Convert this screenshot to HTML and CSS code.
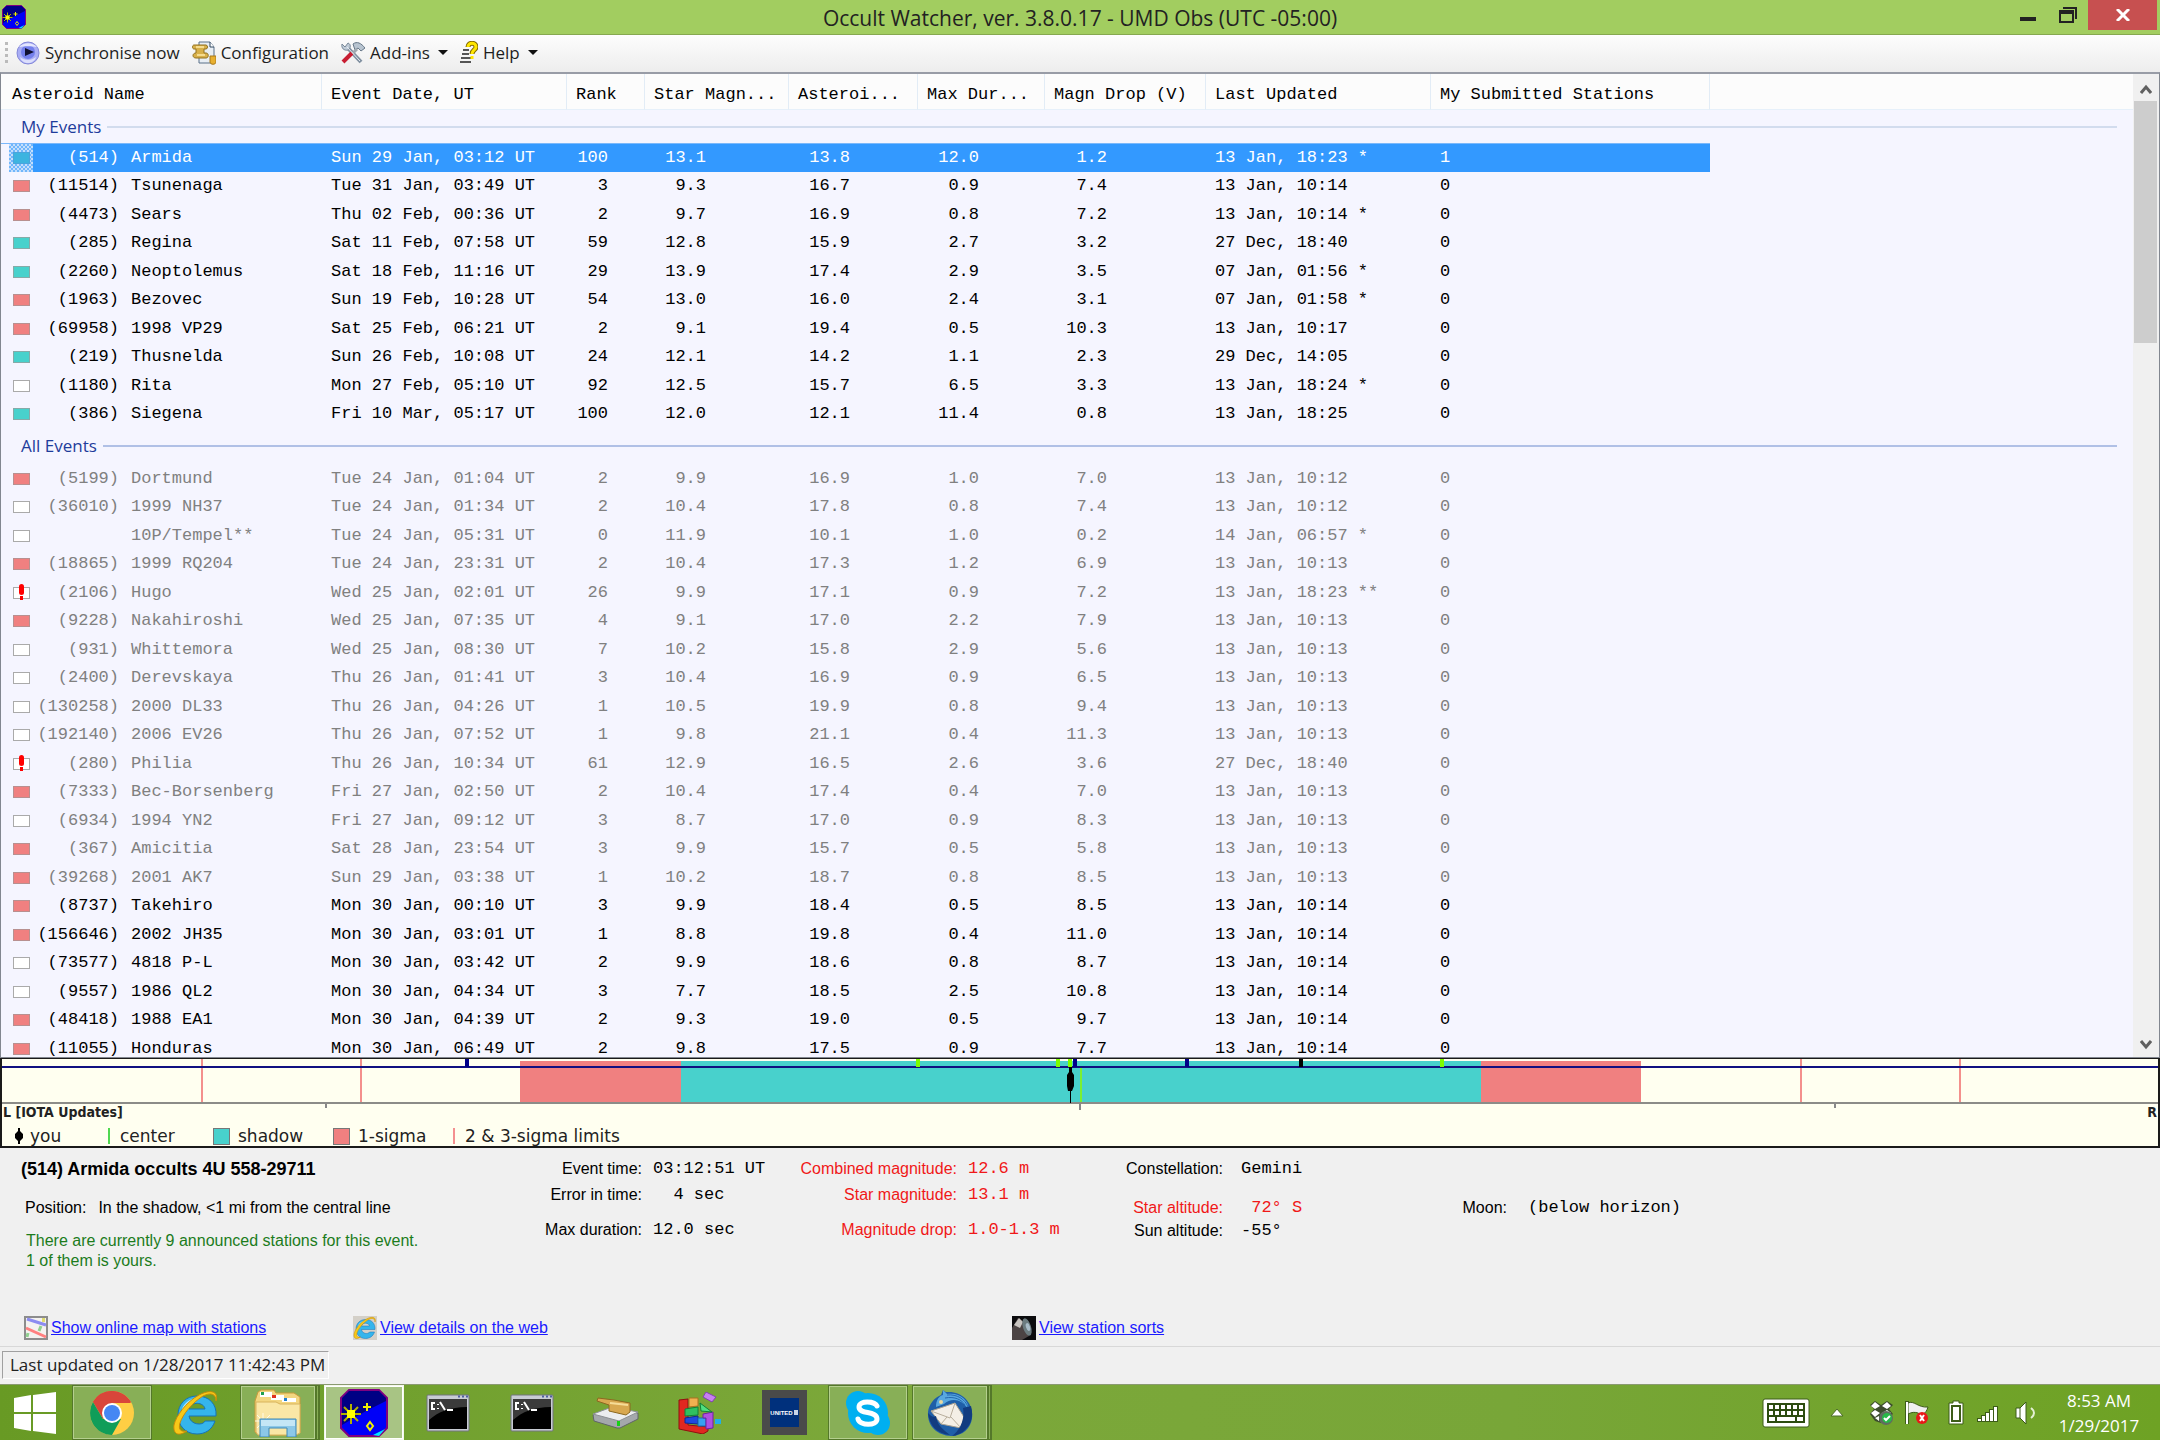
FILE: index.html
```html
<!DOCTYPE html>
<html lang="en">
<head>
<meta charset="utf-8">
<title>Occult Watcher</title>
<link rel="stylesheet" href="styles.css">
</head>
<body>
<svg class="defs" aria-hidden="true">
  <symbol id="app" viewBox="0 0 48 48">
    <path d="M9 1H39L47 9V39L39 47H9L1 39V9Z" fill="#0000f8" stroke="#800080" stroke-width="2"/>
    <path d="M9 2H39L46 9V12L26 22L2 36V9Z" fill="#000084"/>
    <path d="M11 15V35M1 25H21M4 18L18 32M18 18L4 32" stroke="#b0b000" stroke-width="2"/>
    <rect x="7" y="21" width="8" height="8" fill="#ffff00"/>
    <path d="M27 14V22M23 18H31M30 33L33 37L30 41L27 37Z" stroke="#f0f000" stroke-width="2" fill="none"/>
    <path d="M33 46L45 40L39 47Z" fill="#00e8ff"/>
  </symbol>
  <symbol id="ie" viewBox="0 0 48 48">
    <path d="M44 27H17C18 36 31 37 33 32H43C40 41 33 45 25 45C13 45 6 36 6 26C6 15 14 7 25 7C37 7 45 15 44 27ZM33 20C32 13 19 12 17 20Z" fill="#35b5ec" stroke="#1673b8" stroke-width="1"/>
    <path d="M10 20C13 12 20 9 27 10C20 12 14 15 10 22Z" fill="#a8e6fb"/>
    <path d="M44 12C47 2 38 0 27 6C14 13 4 27 2 36C1 45 6 48 15 42C9 43 6 41 8 34C11 25 20 14 31 7C39 3 44 5 44 12Z" fill="#f8c818" stroke="#c98c08" stroke-width="1"/>
  </symbol>
  <symbol id="cmd" viewBox="0 0 44 38">
    <rect x="1" y="1" width="42" height="36" rx="1" fill="#c8ccd4" stroke="#70747c"/>
    <path d="M32 2.500H42" stroke="#5060a0" stroke-width="2" stroke-dasharray="2 2"/>
    <rect x="3" y="5" width="38" height="30" fill="#000"/>
    <path d="M3 5H41V13C24 13 12 18 3 26Z" fill="#3b3b3b"/>
    <path d="M9 9H6V15H9M12 10V11M12 14V15M14 8L19 16M21 16H27" stroke="#fff" stroke-width="2" fill="none"/>
  </symbol>
</svg>

<header class="titlebar">
  <svg class="title-icon"><use href="#app"/></svg>
  <h1>Occult Watcher, ver. 3.8.0.17 - UMD Obs (UTC -05:00)</h1>
  <div class="window-buttons">
    <button class="minimize" aria-label="Minimize"><svg viewBox="0 0 16 18" width="16" height="18"><rect y="11" width="16" height="4" fill="#222"/></svg></button>
    <button class="restore" aria-label="Restore"><svg viewBox="0 0 18 16" width="18" height="16"><path d="M4 1H17V12" fill="none" stroke="#222" stroke-width="2"/><path d="M0 3H15V16H0ZM2 7V14H13V7Z" fill="#222" fill-rule="evenodd"/></svg></button>
    <button class="close" aria-label="Close"><svg viewBox="0 0 14 12" width="14" height="12"><path d="M1 0L13 12M13 0L1 12" stroke="#fff" stroke-width="3"/></svg></button>
  </div>
</header>

<nav class="toolbar">
  <span class="grip"></span>
  <button class="tool"><svg viewBox="0 0 24 24"><circle cx="12" cy="12" r="11" fill="#a9aef5" stroke="#8488d8"/><circle cx="12" cy="11" r="7" fill="#7480ec"/><path d="M3 6C8 1 16 1 21 6C16 5 8 5 3 6Z" fill="#e4e6ff"/><path d="M4 16C9 20 15 20 20 16C18 24 6 24 4 16Z" fill="#dcdffc"/><path d="M9 7L18 11L9 15Z" fill="#101030"/></svg>Synchronise now</button>
  <button class="tool"><svg viewBox="0 0 24 24"><path d="M7 1H18L22 6V22H7Z" fill="#e8eef4" stroke="#5a7088"/><path d="M18 1V6H22" fill="#fff" stroke="#304860"/><path d="M2 4H14C16 4 16 8 14 8H12V12H14C17 12 17 17 14 17H4C0 17 0 12 4 12V8H2C0 8 0 4 2 4Z" fill="#d8b04a" stroke="#92701e"/><path d="M4 6H12M5 14H13" stroke="#f6dc8e" stroke-width="2"/><path d="M18 15H24V21C24 24 18 24 18 21Z" fill="#e8b030" stroke="#a87818"/></svg>Configuration</button>
  <button class="tool"><svg viewBox="0 0 24 24"><path d="M5 5L20 21" stroke="#8090a0" stroke-width="4"/><path d="M1 3L4 6L7 2C10 3 10 7 7 9C3 10 0 7 1 3Z" fill="#c0ccd8" stroke="#788898"/><path d="M12 3C16 0 20 2 24 7L20 10L17 7L14 9Z" fill="#b8c4d0" stroke="#687888"/><path d="M16 8L11 13" stroke="#a0a8b0" stroke-width="3"/><path d="M11 12L2 21" stroke="#c81e32" stroke-width="4"/><path d="M6 6L19 20" stroke="#e8eef4" stroke-width="1"/></svg>Add-ins<i class="caret"></i></button>
  <button class="tool help"><svg viewBox="0 0 18 24"><path d="M2 9H12V22H2Z" fill="#f4f4f4"/><path d="M3 9H9M2 13H9M1 17H11M0 21H11" stroke="#555" stroke-width="2"/><path d="M8 6C8 1 16 1 16 6C16 9 12 9 12 13" fill="none" stroke="#806800" stroke-width="5"/><path d="M8 6C8 1 16 1 16 6C16 9 12 9 12 13M12 15V18" fill="none" stroke="#ffe600" stroke-width="3"/></svg>Help<i class="caret"></i></button>
</nav>

<main class="list-panel">
<div class="list">
<table>
<colgroup><col class="c-mark"><col class="c-num"><col class="c-name"><col class="c-date"><col class="c-rank"><col class="c-star"><col class="c-ast"><col class="c-dur"><col class="c-drop"><col class="c-upd"><col class="c-sub"><col></colgroup>
<thead><tr><th colspan="3">Asteroid Name</th><th>Event Date, UT</th><th>Rank</th><th>Star Magn...</th><th>Asteroi...</th><th>Max Dur...</th><th>Magn Drop (V)</th><th>Last Updated</th><th>My Submitted Stations</th><th class="filler"></th></tr></thead>
<tbody class="mine">
<tr class="group"><th colspan="12"><div>My Events</div></th></tr>
<tr class="selected"><td><i class="teal"></i></td><td>(514)</td><td>Armida</td><td>Sun 29 Jan, 03:12 UT</td><td>100</td><td>13.1</td><td>13.8</td><td>12.0</td><td>1.2</td><td>13 Jan, 18:23 *</td><td>1</td><td></td></tr>
<tr><td><i class="coral"></i></td><td>(11514)</td><td>Tsunenaga</td><td>Tue 31 Jan, 03:49 UT</td><td>3</td><td>9.3</td><td>16.7</td><td>0.9</td><td>7.4</td><td>13 Jan, 10:14</td><td>0</td><td></td></tr>
<tr><td><i class="coral"></i></td><td>(4473)</td><td>Sears</td><td>Thu 02 Feb, 00:36 UT</td><td>2</td><td>9.7</td><td>16.9</td><td>0.8</td><td>7.2</td><td>13 Jan, 10:14 *</td><td>0</td><td></td></tr>
<tr><td><i class="teal"></i></td><td>(285)</td><td>Regina</td><td>Sat 11 Feb, 07:58 UT</td><td>59</td><td>12.8</td><td>15.9</td><td>2.7</td><td>3.2</td><td>27 Dec, 18:40</td><td>0</td><td></td></tr>
<tr><td><i class="teal"></i></td><td>(2260)</td><td>Neoptolemus</td><td>Sat 18 Feb, 11:16 UT</td><td>29</td><td>13.9</td><td>17.4</td><td>2.9</td><td>3.5</td><td>07 Jan, 01:56 *</td><td>0</td><td></td></tr>
<tr><td><i class="coral"></i></td><td>(1963)</td><td>Bezovec</td><td>Sun 19 Feb, 10:28 UT</td><td>54</td><td>13.0</td><td>16.0</td><td>2.4</td><td>3.1</td><td>07 Jan, 01:58 *</td><td>0</td><td></td></tr>
<tr><td><i class="coral"></i></td><td>(69958)</td><td>1998 VP29</td><td>Sat 25 Feb, 06:21 UT</td><td>2</td><td>9.1</td><td>19.4</td><td>0.5</td><td>10.3</td><td>13 Jan, 10:17</td><td>0</td><td></td></tr>
<tr><td><i class="teal"></i></td><td>(219)</td><td>Thusnelda</td><td>Sun 26 Feb, 10:08 UT</td><td>24</td><td>12.1</td><td>14.2</td><td>1.1</td><td>2.3</td><td>29 Dec, 14:05</td><td>0</td><td></td></tr>
<tr><td><i></i></td><td>(1180)</td><td>Rita</td><td>Mon 27 Feb, 05:10 UT</td><td>92</td><td>12.5</td><td>15.7</td><td>6.5</td><td>3.3</td><td>13 Jan, 18:24 *</td><td>0</td><td></td></tr>
<tr><td><i class="teal"></i></td><td>(386)</td><td>Siegena</td><td>Fri 10 Mar, 05:17 UT</td><td>100</td><td>12.0</td><td>12.1</td><td>11.4</td><td>0.8</td><td>13 Jan, 18:25</td><td>0</td><td></td></tr>
</tbody>
<tbody class="all">
<tr class="group"><th colspan="12"><div>All Events</div></th></tr>
<tr class="past"><td><i class="coral"></i></td><td>(5199)</td><td>Dortmund</td><td>Tue 24 Jan, 01:04 UT</td><td>2</td><td>9.9</td><td>16.9</td><td>1.0</td><td>7.0</td><td>13 Jan, 10:12</td><td>0</td><td></td></tr>
<tr class="past"><td><i></i></td><td>(36010)</td><td>1999 NH37</td><td>Tue 24 Jan, 01:34 UT</td><td>2</td><td>10.4</td><td>17.8</td><td>0.8</td><td>7.4</td><td>13 Jan, 10:12</td><td>0</td><td></td></tr>
<tr class="past"><td><i></i></td><td></td><td>10P/Tempel**</td><td>Tue 24 Jan, 05:31 UT</td><td>0</td><td>11.9</td><td>10.1</td><td>1.0</td><td>0.2</td><td>14 Jan, 06:57 *</td><td>0</td><td></td></tr>
<tr class="past"><td><i class="coral"></i></td><td>(18865)</td><td>1999 RQ204</td><td>Tue 24 Jan, 23:31 UT</td><td>2</td><td>10.4</td><td>17.3</td><td>1.2</td><td>6.9</td><td>13 Jan, 10:13</td><td>0</td><td></td></tr>
<tr class="past"><td><i class="alert"></i></td><td>(2106)</td><td>Hugo</td><td>Wed 25 Jan, 02:01 UT</td><td>26</td><td>9.9</td><td>17.1</td><td>0.9</td><td>7.2</td><td>13 Jan, 18:23 **</td><td>0</td><td></td></tr>
<tr class="past"><td><i class="coral"></i></td><td>(9228)</td><td>Nakahiroshi</td><td>Wed 25 Jan, 07:35 UT</td><td>4</td><td>9.1</td><td>17.0</td><td>2.2</td><td>7.9</td><td>13 Jan, 10:13</td><td>0</td><td></td></tr>
<tr class="past"><td><i></i></td><td>(931)</td><td>Whittemora</td><td>Wed 25 Jan, 08:30 UT</td><td>7</td><td>10.2</td><td>15.8</td><td>2.9</td><td>5.6</td><td>13 Jan, 10:13</td><td>0</td><td></td></tr>
<tr class="past"><td><i></i></td><td>(2400)</td><td>Derevskaya</td><td>Thu 26 Jan, 01:41 UT</td><td>3</td><td>10.4</td><td>16.9</td><td>0.9</td><td>6.5</td><td>13 Jan, 10:13</td><td>0</td><td></td></tr>
<tr class="past"><td><i></i></td><td>(130258)</td><td>2000 DL33</td><td>Thu 26 Jan, 04:26 UT</td><td>1</td><td>10.5</td><td>19.9</td><td>0.8</td><td>9.4</td><td>13 Jan, 10:13</td><td>0</td><td></td></tr>
<tr class="past"><td><i></i></td><td>(192140)</td><td>2006 EV26</td><td>Thu 26 Jan, 07:52 UT</td><td>1</td><td>9.8</td><td>21.1</td><td>0.4</td><td>11.3</td><td>13 Jan, 10:13</td><td>0</td><td></td></tr>
<tr class="past"><td><i class="alert"></i></td><td>(280)</td><td>Philia</td><td>Thu 26 Jan, 10:34 UT</td><td>61</td><td>12.9</td><td>16.5</td><td>2.6</td><td>3.6</td><td>27 Dec, 18:40</td><td>0</td><td></td></tr>
<tr class="past"><td><i class="coral"></i></td><td>(7333)</td><td>Bec-Borsenberg</td><td>Fri 27 Jan, 02:50 UT</td><td>2</td><td>10.4</td><td>17.4</td><td>0.4</td><td>7.0</td><td>13 Jan, 10:13</td><td>0</td><td></td></tr>
<tr class="past"><td><i></i></td><td>(6934)</td><td>1994 YN2</td><td>Fri 27 Jan, 09:12 UT</td><td>3</td><td>8.7</td><td>17.0</td><td>0.9</td><td>8.3</td><td>13 Jan, 10:13</td><td>0</td><td></td></tr>
<tr class="past"><td><i class="coral"></i></td><td>(367)</td><td>Amicitia</td><td>Sat 28 Jan, 23:54 UT</td><td>3</td><td>9.9</td><td>15.7</td><td>0.5</td><td>5.8</td><td>13 Jan, 10:13</td><td>0</td><td></td></tr>
<tr class="past"><td><i class="coral"></i></td><td>(39268)</td><td>2001 AK7</td><td>Sun 29 Jan, 03:38 UT</td><td>1</td><td>10.2</td><td>18.7</td><td>0.8</td><td>8.5</td><td>13 Jan, 10:13</td><td>0</td><td></td></tr>
<tr><td><i class="coral"></i></td><td>(8737)</td><td>Takehiro</td><td>Mon 30 Jan, 00:10 UT</td><td>3</td><td>9.9</td><td>18.4</td><td>0.5</td><td>8.5</td><td>13 Jan, 10:14</td><td>0</td><td></td></tr>
<tr><td><i class="coral"></i></td><td>(156646)</td><td>2002 JH35</td><td>Mon 30 Jan, 03:01 UT</td><td>1</td><td>8.8</td><td>19.8</td><td>0.4</td><td>11.0</td><td>13 Jan, 10:14</td><td>0</td><td></td></tr>
<tr><td><i></i></td><td>(73577)</td><td>4818 P-L</td><td>Mon 30 Jan, 03:42 UT</td><td>2</td><td>9.9</td><td>18.6</td><td>0.8</td><td>8.7</td><td>13 Jan, 10:14</td><td>0</td><td></td></tr>
<tr><td><i></i></td><td>(9557)</td><td>1986 QL2</td><td>Mon 30 Jan, 04:34 UT</td><td>3</td><td>7.7</td><td>18.5</td><td>2.5</td><td>10.8</td><td>13 Jan, 10:14</td><td>0</td><td></td></tr>
<tr><td><i class="coral"></i></td><td>(48418)</td><td>1988 EA1</td><td>Mon 30 Jan, 04:39 UT</td><td>2</td><td>9.3</td><td>19.0</td><td>0.5</td><td>9.7</td><td>13 Jan, 10:14</td><td>0</td><td></td></tr>
<tr><td><i class="coral"></i></td><td>(11055)</td><td>Honduras</td><td>Mon 30 Jan, 06:49 UT</td><td>2</td><td>9.8</td><td>17.5</td><td>0.9</td><td>7.7</td><td>13 Jan, 10:14</td><td>0</td><td></td></tr>
</tbody>
</table>
</div>
<div class="scrollbar">
  <button aria-label="Scroll up"><svg viewBox="0 0 12 12" width="12" height="12"><path d="M1 10L6 4L11 10" fill="none" stroke="#606060" stroke-width="3"/></svg></button>
  <div class="track"><div class="thumb"></div></div>
  <button aria-label="Scroll down"><svg viewBox="0 0 12 12" width="12" height="12"><path d="M1 2L6 8L11 2" fill="none" stroke="#606060" stroke-width="3"/></svg></button>
</div>
</main>

<section class="chart">
  <svg class="plot" viewBox="0 0 2156 52" preserveAspectRatio="none">
    <rect x="518" y="2" width="1121" height="42" fill="#f08080"/>
    <rect x="679" y="2" width="800" height="42" fill="#48d1cc"/>
    <path d="M200 0V44M359 0V44M1799 0V44M1958 0V44" stroke="#f4908c" stroke-width="2"/>
    <path d="M1079 9V44" stroke="#7cf030" stroke-width="2"/>
    <path d="M0 8H2156" stroke="#101080" stroke-width="2"/>
    <path d="M0 44H2156" stroke="#8c8c88" stroke-width="2"/>
    <path d="M324 45V49M1078 45V51M1833 45V49" stroke="#888" stroke-width="2"/>
    <path d="M465 0V8M1073 0V8M1185 0V8" stroke="#000088" stroke-width="4"/>
    <path d="M916 0V8M1056 0V8M1068 0V8M1440 0V8" stroke="#7fff00" stroke-width="4"/>
    <path d="M1299 0V8" stroke="#000" stroke-width="4"/>
    <path d="M1067 8H1070V13L1072 16V27L1070 32H1069V44H1068V32H1066L1065 27V16L1067 13Z" fill="#000"/>
  </svg>
  <div class="source"><b>L [IOTA Updates]</b><b>R</b></div>
  <ul class="legend">
    <li class="l-you"><svg viewBox="0 0 8 16" width="8" height="16"><path d="M3 0H5V3L8 6V10L5 13V16H3V13L0 10V6L3 3Z"/></svg>you</li>
    <li class="l-center"><i class="line green"></i>center</li>
    <li class="l-shadow"><i class="box teal"></i>shadow</li>
    <li class="l-sigma"><i class="box coral"></i>1-sigma</li>
    <li class="l-limits"><i class="line red"></i>2 &amp; 3-sigma limits</li>
  </ul>
</section>

<section class="details">
  <div class="facts">
    <div class="summary">
      <h2>(514) Armida occults 4U 558-29711</h2>
      <p class="position"><span>Position:</span><span>In the shadow, &lt;1 mi from the central line</span></p>
      <p class="stations">There are currently 9 announced stations for this event.<br>1 of them is yours.</p>
    </div>
    <dl class="timing"><dt>Event time:</dt><dd>03:12:51 UT</dd><dt>Error in time:</dt><dd>  4 sec</dd><dt>Max duration:</dt><dd>12.0 sec</dd></dl>
    <dl class="timing magnitudes"><dt>Combined magnitude:</dt><dd>12.6 m</dd><dt>Star magnitude:</dt><dd>13.1 m</dd><dt>Magnitude drop:</dt><dd>1.0-1.3 m</dd></dl>
    <div class="sky">
      <dl><dt>Constellation:</dt><dd>Gemini</dd></dl>
      <dl class="lower"><dt class="warn">Star altitude:</dt><dd class="warn"> 72° S</dd><dt>Sun altitude:</dt><dd>-55°</dd></dl>
    </div>
    <dl class="moon"><dt>Moon:</dt><dd>(below horizon)</dd></dl>
  </div>
  <div class="links">
    <a href="#map"><svg viewBox="0 0 24 24"><rect x="1" y="1" width="22" height="22" fill="#f4f2f0" stroke="#8c8c8c" stroke-width="2"/><path d="M3 3L22 9" stroke="#8c8cf0" stroke-width="3"/><path d="M2 12L22 21" stroke="#ff8080" stroke-width="3"/><path d="M17 10L15 15M4 17L3 21" stroke="#90d090" stroke-width="3"/><path d="M18 2H21V6H18Z" fill="#e0dc70"/></svg><span>Show online map with stations</span></a>
    <a href="#web"><svg viewBox="0 0 48 48"><rect width="48" height="48" fill="#d4d0c8"/><use href="#ie"/></svg><span>View details on the web</span></a>
    <a href="#sorts"><svg viewBox="0 0 24 24"><rect width="24" height="24" fill="#0c0c0e"/><path d="M0 12L6 2L12 6L17 20L10 24H0Z" fill="#4c4444"/><path d="M2 9L7 2L11 6L8 12Z" fill="#c8c4c0"/><ellipse cx="15" cy="11" rx="4" ry="9" fill="#6c7c80" transform="rotate(-18 15 11)"/><ellipse cx="16" cy="11" rx="2" ry="4" fill="#a8bcc8" transform="rotate(-18 16 11)"/></svg><span>View station sorts</span></a>
  </div>
</section>

<footer class="status"><span>Last updated on 1/28/2017 11:42:43 PM</span></footer>

<nav class="taskbar">
  <button class="start" aria-label="Start"><svg viewBox="0 0 42 42" width="42" height="42"><path d="M0 6L17 3V20H0ZM19 3L42 0V20H19ZM0 22H17V39L0 36ZM19 22H42V42L19 39Z" fill="#fff"/></svg></button>
  <button class="task open" aria-label="Chrome"><svg viewBox="0 0 44 44" width="44" height="46"><circle cx="22" cy="22" r="22" fill="#ffce44"/><path d="M22 22L3 11A22 22 0 0 1 41 11H22Z" fill="#db4437"/><path d="M22 0A22 22 0 0 0 3 11L13 28L22 12H41A22 22 0 0 0 22 0Z" fill="#d9463a"/><path d="M3 11A22 22 0 0 0 22 44L31 28L13 28Z" fill="#109d59"/><circle cx="22" cy="22" r="10" fill="#fff"/><circle cx="22" cy="22" r="8" fill="#4587f3"/></svg></button>
  <button class="task" aria-label="Internet Explorer"><svg width="48" height="50"><use href="#ie"/></svg></button>
  <button class="task open stacked" aria-label="File Explorer"><svg viewBox="0 0 48 48" width="48" height="48"><path d="M4 3L7 1H20L22 4H40L46 8V44L42 46H4L1 43V12Z" fill="#f3d680" stroke="#c89a3c"/><path d="M6 3H18V8H6ZM17 6H30V11H17ZM28 9H42V13H28Z" fill="#fff"/><rect x="7" y="3" width="3" height="3" fill="#20a050"/><rect x="18" y="6" width="4" height="3" fill="#e03020"/><rect x="30" y="9" width="3" height="3" fill="#2080d0"/><path d="M2 13H22L26 15H46V44L42 46H4L2 43Z" fill="#fae7a6" stroke="#d8b45c"/><path d="M9 24V40M1 32H18M3 26L16 39M16 26L3 39" stroke="#fffbe8" stroke-width="1"/><path d="M6 30H42V48H33V39H15V48H6Z" fill="#8cc8e8" stroke="#3c88b8"/><path d="M7 31H41V37H7Z" fill="#c4e6f6"/></svg></button>
  <button class="task open active" aria-label="Occult Watcher"><svg width="48" height="48"><use href="#app"/></svg></button>
  <button class="task" aria-label="Command Prompt"><svg width="44" height="38"><use href="#cmd"/></svg></button>
  <button class="task" aria-label="Command Prompt 2"><svg width="44" height="38"><use href="#cmd"/></svg></button>
  <button class="task" aria-label="Disk Cleanup"><svg viewBox="0 0 48 32" width="48" height="32"><path d="M1 18L18 11L46 16V22L28 31H25L2 24Z" fill="#a4a8ac" stroke="#606468"/><path d="M1 17L20 10L46 15L27 24Z" fill="#eceef0" stroke="#8c9094"/><rect x="25" y="24" width="3" height="5" fill="#18d018"/><path d="M6 1L22 3L38 6V15L34 18L17 14V8L5 4Z" fill="#d8a850" stroke="#8c6820"/><path d="M18 6L36 8" stroke="#f6dc98" stroke-width="2"/></svg></button>
  <button class="task" aria-label="Defragment"><svg viewBox="0 0 44 42" width="44" height="42"><path d="M1 8L10 7V33L30 35V39L25 42L1 37Z" fill="#e02820" stroke="#901010"/><path d="M11 6H20V14L11 15Z" fill="#f0b050" stroke="#a87020"/><path d="M7 17L20 15V23L7 24Z" fill="#30c060" stroke="#108038"/><path d="M7 26L20 24V32L7 31Z" fill="#2048e0" stroke="#102890"/><path d="M20 26H28V34H20Z" fill="#38a0f0" stroke="#1868b0"/><path d="M25 22L35 20V36L28 37V26H25Z" fill="#b050e0" stroke="#7020a0"/><path d="M22 11L34 20L23 19Z" fill="#50e080" stroke="#108038"/><path d="M28 0L38 5L34 10L25 5Z" fill="#c880f0" stroke="#8040b0"/><rect x="37" y="27" width="6" height="5" fill="#20b0e8"/></svg></button>
  <button class="task" aria-label="United"><span class="united">UNITED<i></i></span></button>
  <button class="task open" aria-label="Skype"><svg viewBox="0 0 44 44" width="44" height="44"><circle cx="12" cy="12" r="12" fill="#00aff0"/><circle cx="32" cy="32" r="12" fill="#00aff0"/><circle cx="22" cy="22" r="20" fill="#00aff0"/><path d="M31 15C29 10 13 9 13 16C13 24 31 19 31 28C31 35 14 35 12 28" fill="none" stroke="#fff" stroke-width="5" stroke-linecap="round"/></svg></button>
  <button class="task open stacked" aria-label="Thunderbird"><svg viewBox="0 0 46 46" width="46" height="46"><path d="M16 0C18 2 19 2 20 2C36 1 47 14 45 28C44 38 36 46 24 46C10 45 0 36 1 22C2 14 7 8 14 5Z" fill="#1f5fa8"/><path d="M16 0L20 4C32 2 42 10 42 20C34 8 24 8 17 14L9 17C9 10 12 6 16 5Z" fill="#58a8e0"/><path d="M20 5C30 4 38 9 41 17M18 8C28 6 35 10 38 15" fill="none" stroke="#2468b0" stroke-width="1"/><path d="M4 21L28 13L37 27L34 38L14 34Z" fill="#f4efe6" stroke="#a8a090"/><path d="M4 21L23 28L28 13M14 34L20 27M34 38L24 27" fill="none" stroke="#b8ae9c"/><path d="M1 23C2 35 10 44 23 45C14 38 10 34 9 26C6 28 4 26 1 23ZM44 16C49 34 36 45 25 46C33 40 38 30 36 18Z" fill="#123c80"/><circle cx="14" cy="12" r="2" fill="#e8d8a0"/></svg></button>
  <div class="tray">
    <button class="t-keyboard" aria-label="Keyboard"><svg viewBox="0 0 48 30" width="48" height="30"><rect x="1" y="1" width="46" height="28" rx="2" fill="#fff" stroke="#3c5c18"/><rect x="5" y="5" width="38" height="20" fill="#2c4c10"/><path d="M7 9H41M7 15H41" stroke="#fff" stroke-width="4" stroke-dasharray="4 2"/><path d="M7 21H13M15 21H33M35 21H41" stroke="#fff" stroke-width="4"/></svg></button>
    <button class="t-more" aria-label="Show hidden icons"><svg viewBox="0 0 14 8" width="14" height="8"><path d="M7 0L13 7H1Z" fill="#fff" stroke="#4c6c28"/></svg></button>
    <svg class="t-dropbox" viewBox="0 0 34 26" height="26"><path d="M11 1L17 5L23 1L29 5L25 9L29 14L17 23L11 21L6 14L10 9L6 5Z" fill="#3c4c2c"/><path d="M11 2L16 6L11 9L7 6ZM23 2L27 6L23 9L18 6ZM11 10L16 13L11 17L7 13ZM23 10L27 13L23 17L18 13ZM11 18L15 16V21Z" fill="#fff"/><circle cx="22" cy="18" r="7" fill="#606c60"/><circle cx="23" cy="18" r="5" fill="#28b848"/><path d="M20 18L22 20L26 16" fill="none" stroke="#fff" stroke-width="2"/></svg>
    <svg class="t-flag" viewBox="0 0 38 26" height="26"><path d="M9 1V24" stroke="#3c5c18" stroke-width="4"/><path d="M10 3C16 0 20 8 30 7C28 14 24 16 20 13C17 12 14 12 10 14Z" fill="#f0f0f0" stroke="#3c5c18"/><path d="M9 2V24" stroke="#fff" stroke-width="2"/><circle cx="24" cy="18" r="6" fill="#e81818"/><path d="M22 15L26 21M26 15L22 21" stroke="#fff" stroke-width="2"/></svg>
    <svg class="t-battery" viewBox="0 0 38 26" height="26"><path d="M17 1H23V3H27V24H13V3H17Z" fill="#fff" stroke="#3c5c18"/><path d="M16 6H24V21H16Z" fill="#fff" stroke="#3c5c18" stroke-width="2"/></svg>
    <svg class="t-signal" viewBox="0 0 30 26" height="26"><path d="M3 18H7V15H11V12H15V9H19V6H24V22H3Z" fill="#3c5c18"/><path d="M4 19H7V21H4ZM8 16H11V21H8ZM12 13H15V21H12ZM16 10H19V21H16ZM20 7H23V21H20Z" fill="#fff"/></svg>
    <svg class="t-speaker" viewBox="0 0 44 26" height="26"><path d="M12 8H16L22 2V24L16 18H12Z" fill="#fff" stroke="#3c5c18"/><path d="M16 8V18" stroke="#3c5c18"/><path d="M27 8C31 11 31 15 27 18" fill="none" stroke="#e4f0d4" stroke-width="2"/></svg>
    <div class="clock"><time>8:53 AM</time><time>1/29/2017</time></div>
  </div>
</nav>
</body>
</html>
```
FILE: styles.css
```css
* { box-sizing: border-box; }
body {
  margin: 0;
  height: 100vh;
  display: flex;
  flex-direction: column;
  background: #f0f0f0;
  color: #000;
  font: 16px/24px "Liberation Sans", Arial, sans-serif;
  overflow: hidden;
}
button { border: 0; padding: 0; margin: 0; background: none; font: inherit; color: inherit; }
svg { display: block; flex: none; }
h1, h2, p, dl, dd, ul { margin: 0; padding: 0; }
.defs { position: absolute; width: 0; height: 0; }

/* Title bar */
.titlebar {
  flex: none;
  display: grid;
  grid-template-columns: 1fr auto 1fr;
  height: 35px;
  background: #a2cd60;
  border-bottom: 1px solid #86a850;
}
.title-icon { width: 24px; height: 24px; margin: 5px 2px; }
h1 { font: 21px/36px "Open Sans", "Noto Sans", sans-serif; color: #222; }
.window-buttons { display: flex; justify-content: flex-end; align-items: flex-start; padding-right: 3px; }
.window-buttons button { height: 30px; width: 40px; display: flex; align-items: center; justify-content: center; }
.window-buttons .close { width: 69px; background: #c75050; }

/* Toolbar */
.toolbar {
  flex: none;
  display: flex;
  align-items: center;
  height: 37px;
  padding-bottom: 2px;
  background: linear-gradient(#fdfdfd, #ededed);
  font: 17px/24px "Open Sans", "Noto Sans", sans-serif;
  color: #1e1e1e;
}
.grip { width: 3px; height: 22px; margin: 0 8px 0 5px; background: repeating-linear-gradient(#bbb 0 3px, transparent 3px 6px); }
.tool { display: flex; align-items: center; gap: 5px; margin-right: 12px; }
.tool svg { width: 24px; height: 24px; }
.tool.help svg { width: 18px; }
.caret { margin-left: 3px; border: 5px solid transparent; border-top-color: #111; border-bottom: 0; }

/* Event list */
.list-panel {
  flex: 1;
  min-height: 0;
  display: flex;
  background: #f5f5ff;
  border: 1px solid #828790;
  border-top: 2px solid #989ca6;
}
.list { flex: 1; min-width: 0; overflow: hidden; }
table {
  width: 100%;
  table-layout: fixed;
  border-collapse: separate;
  border-spacing: 0;
  font: 17px/28px "Liberation Mono", "Courier New", monospace;
  white-space: pre;
}
.c-mark { width: 32px; }
.c-num { width: 86px; }
.c-name { width: 203px; }
.c-date { width: 245px; }
.c-rank { width: 78px; }
.c-star { width: 144px; }
.c-ast { width: 129px; }
.c-dur { width: 127px; }
.c-drop { width: 161px; }
.c-upd { width: 225px; }
.c-sub { width: 279px; }
th { font-weight: 400; text-align: left; padding: 0; }
thead th { height: 36px; padding: 6px 0 0 9px; background: #fcfcfc; border-right: 1px solid #e2ecf6; border-bottom: 1px solid #e6f0fa; }
thead th:first-child { padding-left: 11px; }
thead .filler { border-right: 0; }
.group div {
  display: flex;
  align-items: center;
  gap: 6px;
  height: 33px;
  padding: 0 16px 0 20px;
  color: #1e3c9b;
  font: 17px/24px "Open Sans", "Noto Sans", sans-serif;
}
.group div::after { content: ""; flex: 1; height: 2px; background: #d2dcee; }
.all .group div { height: 36px; }
.all .group div::after { background: #b0c0e6; }
td { padding: 0 0 0 9px; height: 28px; }
tr:nth-child(even) td { height: 29px; }
td:nth-child(1) { padding-left: 12px; }
td:nth-child(2), td:nth-child(5), td:nth-child(6), td:nth-child(7), td:nth-child(8), td:nth-child(9) { text-align: right; padding-left: 0; }
td:nth-child(3) { padding-left: 12px; }
td:nth-child(5) { padding-right: 37px; }
td:nth-child(6) { padding-right: 83px; }
td:nth-child(7) { padding-right: 68px; }
td:nth-child(8) { padding-right: 66px; }
td:nth-child(9) { padding-right: 99px; }
td i { display: block; width: 17px; height: 12px; background: #fff; border: 1px solid #aaa; }
.teal { background: #48d1cc; border-color: #86aaa8; }
.coral { background: #f08080; border-color: #b89090; }
td .alert { position: relative; }
.alert::before { content: ""; position: absolute; left: 5px; top: -4px; width: 5px; height: 11px; border-radius: 3px; background: #f00; }
.alert::after { content: ""; position: absolute; left: 6px; top: 8px; width: 3px; height: 4px; background: #f00; }
.past { color: #808080; }
.selected td { background: #39f; color: #fff; border-top: 1px solid #7ab8fb; }
.selected td:last-child { background: none; border: 0; }
.selected td:first-child { background: linear-gradient(90deg, #f5f5ff 8px, transparent 8px), repeating-conic-gradient(#70b6fb 0 25%, #c4defc 0 50%) 0 0 / 4px 4px; }
.selected td i { background: #3cb4e0; border-color: #4aa4dc; }
.scrollbar { flex: none; display: flex; flex-direction: column; width: 26px; padding: 2px 2px 0 1px; background: #f0f0f0; }
.scrollbar button { height: 25px; display: flex; align-items: center; justify-content: center; }
.track { flex: 1; }
.thumb { height: 26%; background: #cdcdcd; }

/* Shadow path chart */
.chart { flex: none; background: #fffff0; border: 2px solid #1a1a1a; border-top-width: 1px; height: 90px; font: 17px/22px "DejaVu Sans", Verdana, sans-serif; color: #222; }
.plot { width: 100%; height: 52px; }
.source { display: flex; justify-content: space-between; margin-top: -9px; padding: 0 1px; font-size: 14px; line-height: 20px; }
.source b { font-family: "DejaVu Sans Condensed", "DejaVu Sans", sans-serif; }
.legend { display: flex; list-style: none; line-height: 28px; }
.legend li { display: flex; align-items: center; white-space: nowrap; }
.l-you { width: 92px; padding-left: 13px; gap: 7px; }
.l-center { width: 119px; padding-left: 14px; gap: 10px; }
.l-shadow { width: 120px; gap: 8px; }
.l-sigma { width: 120px; gap: 8px; }
.l-limits { gap: 10px; }
.line { width: 2px; height: 16px; }
.green { background: #50d850; }
.red { background: #f49090; }
.box { width: 17px; height: 17px; border: 1px solid #777; }

/* Event details */
.details { flex: none; border-bottom: 1px solid #d8d8d8; }
.facts { display: grid; grid-template-columns: 530fr 250fr 320fr 340fr 720fr; padding-top: 8px; height: 168px; white-space: nowrap; }
.summary h2 { padding-left: 21px; font-size: 18px; line-height: 26px; }
.position { display: flex; gap: 12px; margin-top: 14px; padding-left: 25px; }
.stations { margin-top: 11px; padding-left: 26px; line-height: 20px; color: #1c7c1c; }
dl { display: grid; grid-template-columns: 112px 1fr; column-gap: 11px; grid-auto-rows: 24px; align-items: center; }
dt { justify-self: end; }
dd { font: 17px/24px "Liberation Mono", "Courier New", monospace; white-space: pre; }
.timing { grid-template-rows: 26px 26px 44px; align-content: start; }
.magnitudes { grid-template-columns: 177px 1fr; color: #f01818; }
.sky dl { grid-template-columns: 123px 1fr; column-gap: 18px; grid-auto-rows: 26px; }
.sky .lower { margin-top: 14px; grid-auto-rows: 23px; }
.warn { color: #f01818; }
.moon { grid-template-columns: 67px 1fr; column-gap: 21px; padding-top: 40px; align-content: start; }
.links { display: grid; grid-template-columns: 329fr 659fr 1148fr; padding: 0 0 6px 24px; }
.links a { display: flex; align-items: center; gap: 3px; justify-self: start; color: #1a1aff; white-space: nowrap; }
.links svg { width: 24px; height: 24px; }

/* Status bar */
.status { flex: none; height: 37px; padding: 4px 2px; font: 17px/26px "Open Sans", "Noto Sans", sans-serif; color: #222; }
.status span { display: inline-block; padding: 0 3px 0 7px; border: 1px solid; border-color: #a0a0a0 #fff #fff #a0a0a0; }

/* Taskbar */
.taskbar {
  flex: none;
  display: flex;
  gap: 4px;
  height: 56px;
  border-top: 1px solid #8a9a70;
  background: linear-gradient(90deg, #689a24, #7ca83a 40%, #78a638 70%, #6ea224);
}
.start { width: 68px; padding-left: 14px; }
.task { width: 80px; display: flex; align-items: center; justify-content: center; }
.open { border: 1px solid #54782a; background: #88af57; box-shadow: inset 0 0 0 1px #b4cf8e; }
.stacked { border-right-width: 5px; border-right-style: double; }
.active { border-color: #f4f8ec; background: #a8c484; box-shadow: inset 0 0 0 1px #fff; }
.united { display: flex; align-items: center; justify-content: center; width: 45px; height: 45px; border: 8px solid #4a4a4a; background: #00307c; color: #fff; font: bold 6px/8px "Liberation Sans", sans-serif; }
.united i { width: 4px; height: 5px; margin-left: 1px; background: #c8d4e8; }
.tray { display: flex; align-items: center; margin-left: auto; padding-right: 10px; }
.t-keyboard { width: 48px; }
.t-more { width: 54px; display: flex; justify-content: center; }
.t-dropbox { width: 34px; }
.t-flag, .t-battery { width: 38px; }
.t-signal { width: 30px; }
.t-speaker { width: 44px; }
.clock { width: 102px; text-align: center; color: #fff; font: 17px/25px "Open Sans", "Noto Sans", sans-serif; }
.clock time { display: block; }
```
